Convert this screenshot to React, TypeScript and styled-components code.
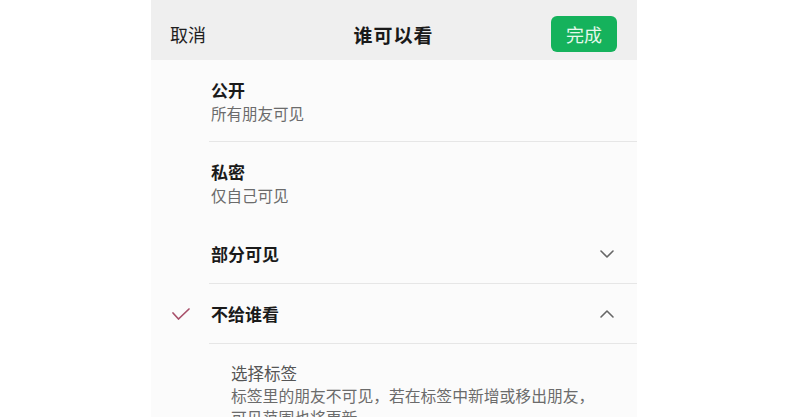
import styled, {createGlobalStyle} from 'styled-components';

const GlobalStyle = createGlobalStyle`
  html, body {
    margin: 0;
    padding: 0;
    background: #ffffff;
  }
  body {
    font-family: "Noto Sans CJK SC", "Noto Sans", sans-serif;
    overflow: hidden;
  }
`;

type Option = {
    title: string;
    sub?: string;
    chevron?: 'down' | 'up';
    checked?: boolean;
    divider?: boolean;
};

const options: Option[] = [
    {title: '公开', sub: '所有朋友可见', divider: true},
    {title: '私密', sub: '仅自己可见'},
    {title: '部分可见', chevron: 'down', divider: true},
    {title: '不给谁看', chevron: 'up', checked: true, divider: true},
];

const Chevron = ({dir}: { dir: 'down' | 'up' }) => (
    <svg width="16" height="10" viewBox="0 0 16 10">
        <path
            d={dir === 'down' ? 'M2 2 L8 8 L14 2' : 'M2 8 L8 2 L14 8'}
            fill="none"
            stroke="#666"
            strokeWidth="1.6"
            strokeLinecap="round"
            strokeLinejoin="round"
        />
    </svg>
);

const Check = () => (
    <svg width="20" height="14" viewBox="0 0 20 14">
        <path
            d="M2 6 L7.5 12 L18 2"
            fill="none"
            stroke="#a8506a"
            strokeWidth="1.7"
            strokeLinecap="round"
            strokeLinejoin="round"
        />
    </svg>
);

const App = () => {
    return (
        <Page>
            <GlobalStyle/>
            <Panel>
                <Header>
                    <Cancel>取消</Cancel>
                    <Title>谁可以看</Title>
                    <Done>完成</Done>
                </Header>
                <List>
                    {options.map((o) => (
                        <Item key={o.title} $divider={!!o.divider}>
                            <Mark>{o.checked && <Check/>}</Mark>
                            <Texts $single={!o.sub}>
                                <ItemTitle>{o.title}</ItemTitle>
                                {o.sub && <ItemSub>{o.sub}</ItemSub>}
                            </Texts>
                            {o.chevron && <Arrow><Chevron dir={o.chevron}/></Arrow>}
                        </Item>
                    ))}
                    <Tags>
                        <TagsTitle>选择标签</TagsTitle>
                        <TagsNote>
                            标签里的朋友不可见，若在标签中新增或移出朋友，
                            <br/>
                            可见范围也将更新
                        </TagsNote>
                    </Tags>
                </List>
            </Panel>
        </Page>
    );
};

const Page = styled.div`
  display: flex;
  justify-content: center;
  width: 100%;
  height: 417px;
  overflow: hidden;
  background: #ffffff;
`;

const Panel = styled.div`
  width: 486px;
  display: flex;
  flex-direction: column;
  background: #fbfbfb;
`;

const Header = styled.header`
  flex-shrink: 0;
  display: grid;
  grid-template-columns: 1fr auto 1fr;
  align-items: center;
  height: 60px;
  padding: 8px 20px 0 19px;
  background: #efefef;
  box-sizing: border-box;
`;

const Cancel = styled.span`
  font-size: 18px;
  color: #1f1f1f;
  justify-self: start;
`;

const Title = styled.span`
  font-size: 19px;
  font-weight: 700;
  color: #1a1a1a;
  letter-spacing: 1px;
`;

const Done = styled.button`
  justify-self: end;
  width: 66px;
  height: 36px;
  border: none;
  border-radius: 6px;
  background: #15b25c;
  color: #e6f8ec;
  font-family: inherit;
  font-size: 18px;
  padding: 0;
`;

const List = styled.div`
  flex-shrink: 0;
  display: flex;
  flex-direction: column;
`;

const Item = styled.div<{ $divider: boolean }>`
  position: relative;
  display: flex;
  align-items: center;
  padding-right: 20px;

  &::after {
    content: '';
    display: ${({$divider}) => ($divider ? 'block' : 'none')};
    position: absolute;
    left: 58px;
    right: 0;
    bottom: 0;
    height: 1px;
    background: #e6e6e6;
  }
`;

const Mark = styled.div`
  width: 60px;
  display: flex;
  justify-content: flex-end;
  padding-right: 20px;
  box-sizing: border-box;
`;

const Texts = styled.div<{ $single: boolean }>`
  flex: 1;
  display: flex;
  flex-direction: column;
  padding: 18px 0;
`;

const ItemTitle = styled.div`
  font-size: 17px;
  line-height: 24px;
  font-weight: 700;
  color: #1a1a1a;
`;

const ItemSub = styled.div`
  font-size: 15.5px;
  line-height: 22px;
  color: #6b6b6b;
`;

const Arrow = styled.div`
  display: flex;
  align-items: center;
  padding-right: 2px;
`;

const Tags = styled.div`
  display: flex;
  flex-direction: column;
  padding: 17px 20px 0 80px;
`;

const TagsTitle = styled.div`
  font-size: 16.5px;
  line-height: 24px;
  color: #555;
`;

const TagsNote = styled.div`
  font-size: 15.8px;
  line-height: 22px;
  color: #6b6b6b;
`;

export default App;
